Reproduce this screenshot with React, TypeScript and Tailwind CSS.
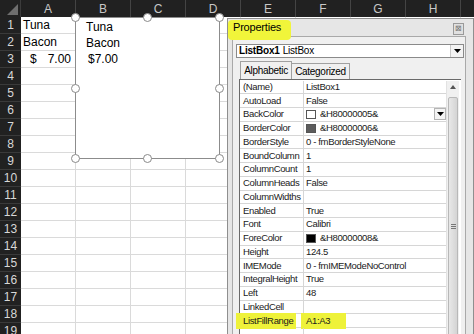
import React from "react";

const cols = ["A", "B", "C", "D", "E", "F", "G", "H", ""];
const rowNums = Array.from({ length: 19 }, (_, i) => i + 1);

type Prop = { name: string; value: string; swatch?: string; drop?: boolean; mark?: boolean };

const props: Prop[] = [
  { name: "(Name)", value: "ListBox1" },
  { name: "AutoLoad", value: "False" },
  { name: "BackColor", value: "&H80000005&", swatch: "bg-white", drop: true },
  { name: "BorderColor", value: "&H80000006&", swatch: "bg-[#5c5c5c]" },
  { name: "BorderStyle", value: "0 - fmBorderStyleNone" },
  { name: "BoundColumn", value: "1" },
  { name: "ColumnCount", value: "1" },
  { name: "ColumnHeads", value: "False" },
  { name: "ColumnWidths", value: "" },
  { name: "Enabled", value: "True" },
  { name: "Font", value: "Calibri" },
  { name: "ForeColor", value: "&H80000008&", swatch: "bg-black" },
  { name: "Height", value: "124.5" },
  { name: "IMEMode", value: "0 - fmIMEModeNoControl" },
  { name: "IntegralHeight", value: "True" },
  { name: "Left", value: "48" },
  { name: "LinkedCell", value: "" },
  { name: "ListFillRange", value: "A1:A3", mark: true },
  { name: "", value: "" },
];

const cellText: Record<number, React.ReactNode> = {
  1: "Tuna",
  2: "Bacon",
  3: (
    <span className="flex w-full justify-between pl-[7px] pr-[4px]">
      <span>$</span>
      <span>7.00</span>
    </span>
  ),
};

const Handle = ({ cls }: { cls: string }) => (
  <span className={`absolute h-[9px] w-[9px] rounded-full border border-[#8a8a8a] bg-white ${cls}`} />
);

const Arrow = () => (
  <svg width="7" height="4" viewBox="0 0 7 4">
    <path d="M0 0h7L3.5 4z" fill="#000" />
  </svg>
);

export default function App() {
  return (
    <div className="relative h-[334px] w-[474px] overflow-hidden bg-white font-['Liberation_Sans',Arial,sans-serif]">
      {/* column headers */}
      <div className="flex h-[17px] bg-[#212121]">
        <div className="relative w-[21px] shrink-0 border-r border-[#3c3c3c]">
          <svg className="absolute bottom-[2px] right-[2px]" width="11" height="11" viewBox="0 0 11 11">
            <path d="M11 0v11H0z" fill="#6e6e6e" />
          </svg>
        </div>
        {cols.map((c, i) => (
          <div
            key={i}
            className="flex w-[55px] shrink-0 items-center justify-center border-r border-[#444] text-[12px] text-[#c8c8c8]"
          >
            {c}
          </div>
        ))}
      </div>

      {/* rows */}
      {rowNums.map((r) => (
        <div key={r} className="flex h-[17px]">
          <div className="flex w-[21px] shrink-0 items-center justify-center border-b border-[#3a3a3a] bg-[#212121] text-[12px] text-[#d8d8d8]">
            {r}
          </div>
          {cols.map((_, i) => (
            <div
              key={i}
              className="flex w-[55px] shrink-0 items-center border-b border-r border-[#dadada] pl-[2px] text-[12px] text-black"
            >
              {i === 0 ? cellText[r] : null}
            </div>
          ))}
        </div>
      ))}

      {/* listbox control */}
      <div className="absolute left-[75px] top-[17px] h-[142px] w-[145px] border-[1.5px] border-[#8c8c8c] bg-white">
        <div className="flex flex-col pl-[10px] pt-[1px] text-[12px] leading-[16px] text-black">
          <span>Tuna</span>
          <span>Bacon</span>
          <span className="pl-[2px]">$7.00</span>
        </div>
        <Handle cls="-left-[5px] -top-[5px]" />
        <Handle cls="left-[67px] -top-[5px]" />
        <Handle cls="-right-[5px] -top-[5px]" />
        <Handle cls="-left-[5px] top-[66px]" />
        <Handle cls="-right-[5px] top-[66px]" />
        <Handle cls="-bottom-[5px] -left-[5px]" />
        <Handle cls="-bottom-[5px] left-[67px]" />
        <Handle cls="-bottom-[5px] -right-[5px]" />
      </div>

      {/* properties window */}
      <div className="absolute left-[227px] top-[18px] flex h-[320px] w-[247px] flex-col border border-[#8f8f8f] bg-[#e6e6e6]">
        <div className="relative flex h-[21px] items-center">
          <span className="absolute left-0 top-[1px] h-[20px] w-[63px] rounded-[4px] bg-[#f1f53a]" />
          <span className="relative pl-[5px] text-[11px] tracking-[-0.2px] text-black">Properties</span>
          <span className="absolute right-[9px] top-[4px] flex h-[12px] w-[11px] items-center justify-center border border-[#9a9a9a] bg-[#e0e0e0] text-[8px] leading-none text-[#777]">
            ⊠
          </span>
        </div>

        <div className="ml-[4px] mr-[7px] flex flex-1 flex-col border border-[#a9a9a9] bg-[#f0f0f0] pl-[3px] pt-[7px]">
          {/* combo */}
          <div className="mr-[1px] flex h-[14px] items-center border border-[#8a8a8a] bg-white text-[10px] tracking-[-0.2px] text-black">
            <span className="pl-[2px] font-bold">ListBox1</span>
            <span className="pl-[3px]">ListBox</span>
            <span className="ml-auto flex h-full w-[13px] items-center justify-center border-l border-[#c8c8c8] bg-[#f3f3f3]">
              <Arrow />
            </span>
          </div>

          {/* tabs */}
          <div className="mt-[3px] flex h-[18px] items-end pl-[4px] text-[10px] tracking-[-0.3px] text-black">
            <div className="flex h-[18px] w-[52px] items-center justify-center border border-b-0 border-[#a0a0a0] bg-[#f0f0f0]">
              Alphabetic
            </div>
            <div className="flex h-[16px] w-[58px] items-center justify-center border-r border-t border-[#a0a0a0]">
              Categorized
            </div>
          </div>

          {/* grid */}
          <div className="ml-[3px] mr-[4px] flex flex-1 border-l border-t border-[#6a6a6a] bg-white pt-[1px]">
            <div className="flex w-[206px] flex-col">
              {props.map((p, i) => (
                <div key={i} className="flex h-[13.75px] shrink-0 border-b border-[#d6d6d6] text-[9.5px] tracking-[-0.35px] text-[#1a1a1a]">
                  <div className="relative flex w-[64px] shrink-0 items-center whitespace-nowrap border-r border-[#d6d6d6] pl-[3px]">
                    {p.mark && <span className="absolute -left-[4px] -top-[1px] h-[16px] w-[60px] bg-[#eef23a]" />}
                    <span className="relative">{p.name}</span>
                  </div>
                  <div className="relative flex flex-1 items-center pl-[2px]">
                    {p.mark && <span className="absolute -left-[3px] -top-[1px] h-[16px] w-[45px] bg-[#eef23a]" />}
                    {p.swatch && (
                      <span className={`mr-[4px] h-[9px] w-[10px] border border-[#555] ${p.swatch}`} />
                    )}
                    <span className="relative">{p.value}</span>
                    {p.drop && (
                      <span className="ml-auto flex h-[12px] w-[12px] items-center justify-center border border-[#b5b5b5] bg-[#f4f4f4]">
                        <Arrow />
                      </span>
                    )}
                  </div>
                </div>
              ))}
            </div>
            {/* scrollbar */}
            <div className="flex w-[13px] flex-col border-l border-[#e2e2e2] bg-[#f0f0f0]">
              <div className="flex h-[13px] items-center justify-center">
                <svg width="6" height="4" viewBox="0 0 6 4">
                  <path d="M0 4h6L3 0z" fill="#555" />
                </svg>
              </div>
              <div className="mx-[1px] mt-[3px] flex flex-1 flex-col items-center rounded-[2px] border border-[#b8b8b8] bg-gradient-to-r from-[#e8e8e8] to-[#d4d4d4] pt-[126px]">
                <span className="h-[1px] w-[5px] bg-[#777]" />
                <span className="mt-[1px] h-[1px] w-[5px] bg-[#777]" />
                <span className="mt-[1px] h-[1px] w-[5px] bg-[#777]" />
              </div>
            </div>
          </div>
        </div>
      </div>
    </div>
  );
}
